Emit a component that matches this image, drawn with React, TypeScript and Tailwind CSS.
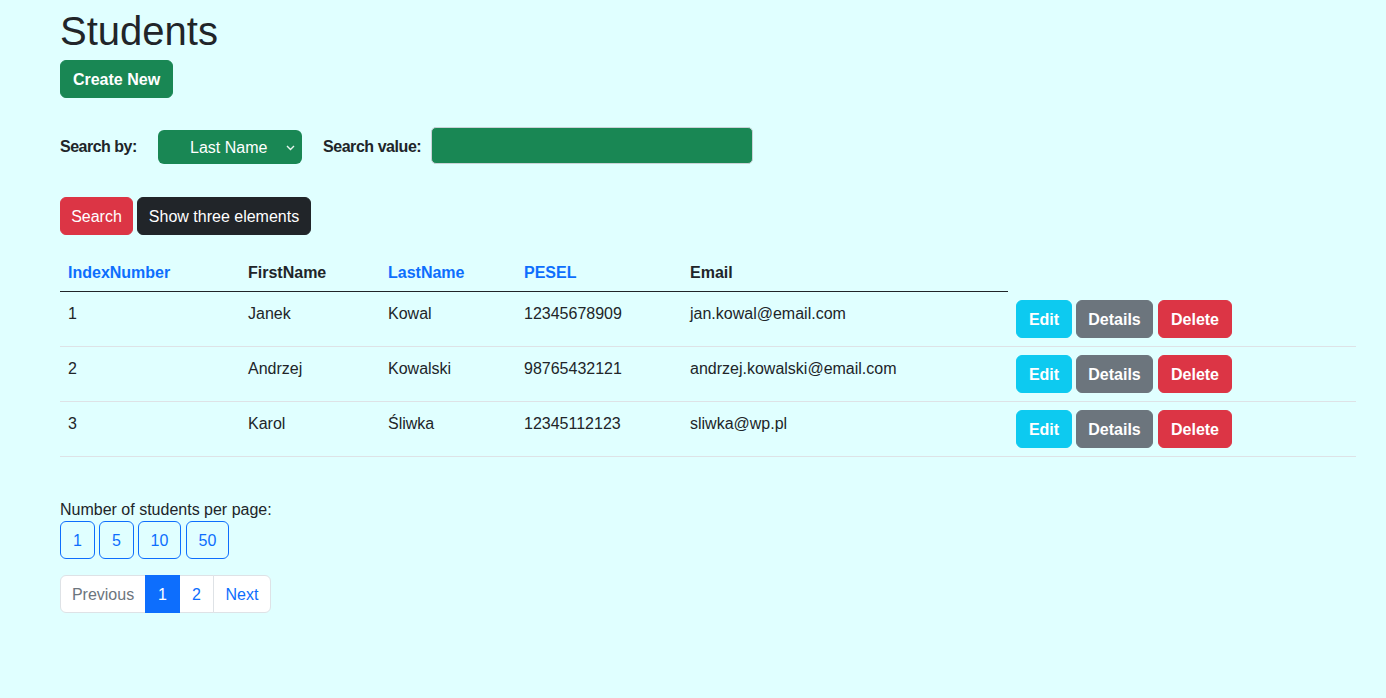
import React from "react";

const rows = [
  { idx: "1", first: "Janek", last: "Kowal", pesel: "12345678909", email: "jan.kowal@email.com" },
  { idx: "2", first: "Andrzej", last: "Kowalski", pesel: "98765432121", email: "andrzej.kowalski@email.com" },
  { idx: "3", first: "Karol", last: "Śliwka", pesel: "12345112123", email: "sliwka@wp.pl" },
];

const font = { fontFamily: '"Liberation Sans", Arial, sans-serif' };

export default function App() {
  return (
    <div className="min-h-screen bg-[#e0ffff] text-[#212529] text-[16px] leading-6" style={font}>
      <div className="pl-[60px] pr-[30px] pt-[7px]">
        <h1 className="mb-[5px] text-[40px] leading-[48px] font-normal">Students</h1>
        <button className="h-[38px] w-[113px] pt-[2px] rounded-[6px] bg-[#198754] text-white font-bold border border-[#198754]">
          Create New
        </button>

        <div className="mt-[29px] flex items-start h-[37px]">
          <span className="mt-[8px] w-[77px] whitespace-nowrap font-bold tracking-[-0.5px]">Search by:</span>
          <div className="mt-[3px] ml-[21px] relative w-[144px] h-[34px] rounded-[6px] bg-[#198754] text-white flex items-center pl-[32px] pt-[2px]">
            <span>Last Name</span>
            <svg className="absolute right-[7px] top-[15px]" width="9" height="6" viewBox="0 0 9 6">
              <polyline points="1,1 4.5,4.5 8,1" fill="none" stroke="#e8f5ee" strokeWidth="1.4" />
            </svg>
          </div>
          <span className="mt-[8px] ml-[21px] w-[99px] whitespace-nowrap font-bold tracking-[-0.45px]">Search value:</span>
          <div className="ml-[9px] w-[322px] h-[37px] rounded-[5px] bg-[#198754] border border-[#c9d1d6]" />
        </div>

        <div className="mt-[33px] flex gap-[4px]">
          <button className="h-[38px] w-[73px] pt-[2px] rounded-[6px] bg-[#dc3545] text-white border border-[#dc3545]">Search</button>
          <button className="h-[38px] w-[174px] pt-[2px] rounded-[6px] bg-[#212529] text-white border border-[#212529]">
            Show three elements
          </button>
        </div>

        <div className="mt-[16px]">
          <div className="grid grid-cols-[180px_140px_136px_166px_326px_1fr] font-bold">
            <div className="px-2 pt-[10px] pb-[6px] border-b border-[#212529] text-[#0d6efd]">IndexNumber</div>
            <div className="px-2 pt-[10px] pb-[6px] border-b border-[#212529]">FirstName</div>
            <div className="px-2 pt-[10px] pb-[6px] border-b border-[#212529] text-[#0d6efd]">LastName</div>
            <div className="px-2 pt-[10px] pb-[6px] border-b border-[#212529] text-[#0d6efd]">PESEL</div>
            <div className="px-2 pt-[10px] pb-[6px] border-b border-[#212529]">Email</div>
            <div />
          </div>
          {rows.map((r) => (
            <div key={r.idx} className="grid grid-cols-[180px_140px_136px_166px_326px_1fr] border-b border-[#dee2e6]">
              <div className="px-2 pt-[10px]">{r.idx}</div>
              <div className="px-2 pt-[10px]">{r.first}</div>
              <div className="px-2 pt-[10px]">{r.last}</div>
              <div className="px-2 pt-[10px]">{r.pesel}</div>
              <div className="px-2 pt-[10px]">{r.email}</div>
              <div className="p-2 flex">
                <button className="h-[38px] w-[56px] pt-[2px] rounded-[6px] bg-[#0dcaf0] text-white font-bold border border-[#0dcaf0]">Edit</button>
                <button className="ml-[4px] h-[38px] w-[77px] pt-[2px] rounded-[6px] bg-[#6c757d] text-white font-bold border border-[#6c757d]">Details</button>
                <button className="ml-[5px] h-[38px] w-[74px] pt-[2px] rounded-[6px] bg-[#dc3545] text-white font-bold border border-[#dc3545]">Delete</button>
              </div>
            </div>
          ))}
        </div>

        <div className="mt-[40px] pt-[1px] h-[24px]">Number of students per page:</div>
        <div className="flex">
          <button className="h-[38px] w-[35px] pt-[2px] rounded-[6px] border border-[#0d6efd] text-[#0d6efd]">1</button>
          <button className="ml-[4px] h-[38px] w-[35px] pt-[2px] rounded-[6px] border border-[#0d6efd] text-[#0d6efd]">5</button>
          <button className="ml-[4px] h-[38px] w-[43px] pt-[2px] rounded-[6px] border border-[#0d6efd] text-[#0d6efd]">10</button>
          <button className="ml-[5px] h-[38px] w-[43px] pt-[2px] rounded-[6px] border border-[#0d6efd] text-[#0d6efd]">50</button>
        </div>

        <div className="mt-[16px] flex">
          <div className="h-[38px] w-[86px] pt-[2px] flex items-center justify-center bg-white border border-[#dee2e6] rounded-l-[6px] text-[#6c757d]">Previous</div>
          <div className="-ml-px relative z-10 h-[38px] w-[35px] pt-[2px] flex items-center justify-center bg-[#0d6efd] border border-[#0d6efd] text-white">1</div>
          <div className="-ml-px h-[38px] w-[35px] pt-[2px] flex items-center justify-center bg-white border border-[#dee2e6] text-[#0d6efd]">2</div>
          <div className="-ml-px h-[38px] w-[58px] pt-[2px] flex items-center justify-center bg-white border border-[#dee2e6] rounded-r-[6px] text-[#0d6efd]">Next</div>
        </div>
      </div>
    </div>
  );
}
